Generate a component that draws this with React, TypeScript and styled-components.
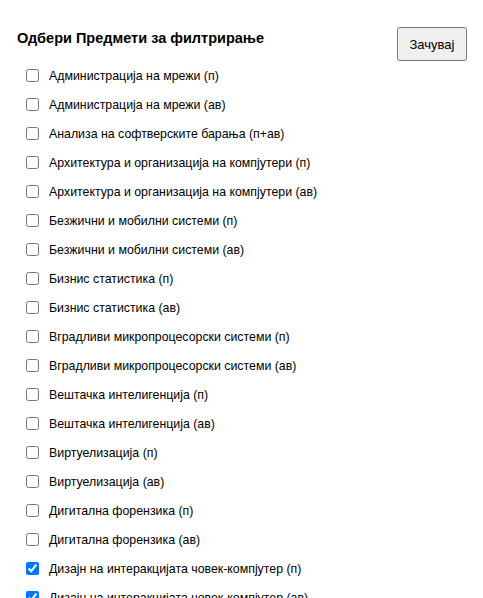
import styled, { createGlobalStyle } from "styled-components";

const GlobalStyle = createGlobalStyle`
  body {
    margin: 0;
    font-family: "Liberation Sans", Arial, sans-serif;
    background: #fff;
    color: #000;
  }
`;

const subjects = [
  "Администрација на мрежи (п)",
  "Администрација на мрежи (ав)",
  "Анализа на софтверските барања (п+ав)",
  "Архитектура и организација на компјутери (п)",
  "Архитектура и организација на компјутери (ав)",
  "Безжични и мобилни системи (п)",
  "Безжични и мобилни системи (ав)",
  "Бизнис статистика (п)",
  "Бизнис статистика (ав)",
  "Вградливи микропроцесорски системи (п)",
  "Вградливи микропроцесорски системи (ав)",
  "Вештачка интелигенција (п)",
  "Вештачка интелигенција (ав)",
  "Виртуелизација (п)",
  "Виртуелизација (ав)",
  "Дигитална форензика (п)",
  "Дигитална форензика (ав)",
  "Дизајн на интеракцијата човек-компјутер (п)",
  "Дизајн на интеракцијата човек-компјутер (ав)",
  "Дизајн на кориснички интерфејси (п)",
];

const checkedSet = new Set([17, 18]);

const Page = styled.div`
  padding: 27px 16px 0 17px;
`;

const Header = styled.div`
  display: flex;
  justify-content: space-between;
  align-items: flex-start;
`;

const Title = styled.h3`
  margin: 3px 0 0;
  font-size: 14.5px;
  font-weight: bold;
`;

const SaveButton = styled.button`
  font-family: "Liberation Sans", Arial, sans-serif;
  font-size: 13px;
  width: 70px;
  height: 34px;
  background: #efefef;
  border: 1px solid #767676;
  border-radius: 3px;
  color: #000;
`;

const List = styled.div`
  display: flex;
  flex-direction: column;
  padding-left: 5px;
  margin-top: 0;
`;

const Row = styled.label`
  display: flex;
  align-items: center;
  height: 29px;
  font-size: 12.35px;
  gap: 10px;
`;

const Box = styled.input`
  margin: 0 0 0 4px;
  width: 13px;
  height: 13px;
`;

export default function App() {
  return (
    <Page>
      <GlobalStyle />
      <Header>
        <Title>Одбери Предмети за филтрирање</Title>
        <SaveButton>Зачувај</SaveButton>
      </Header>
      <List>
        {subjects.map((s, i) => (
          <Row key={s}>
            <Box type="checkbox" defaultChecked={checkedSet.has(i)} />
            {s}
          </Row>
        ))}
      </List>
    </Page>
  );
}
